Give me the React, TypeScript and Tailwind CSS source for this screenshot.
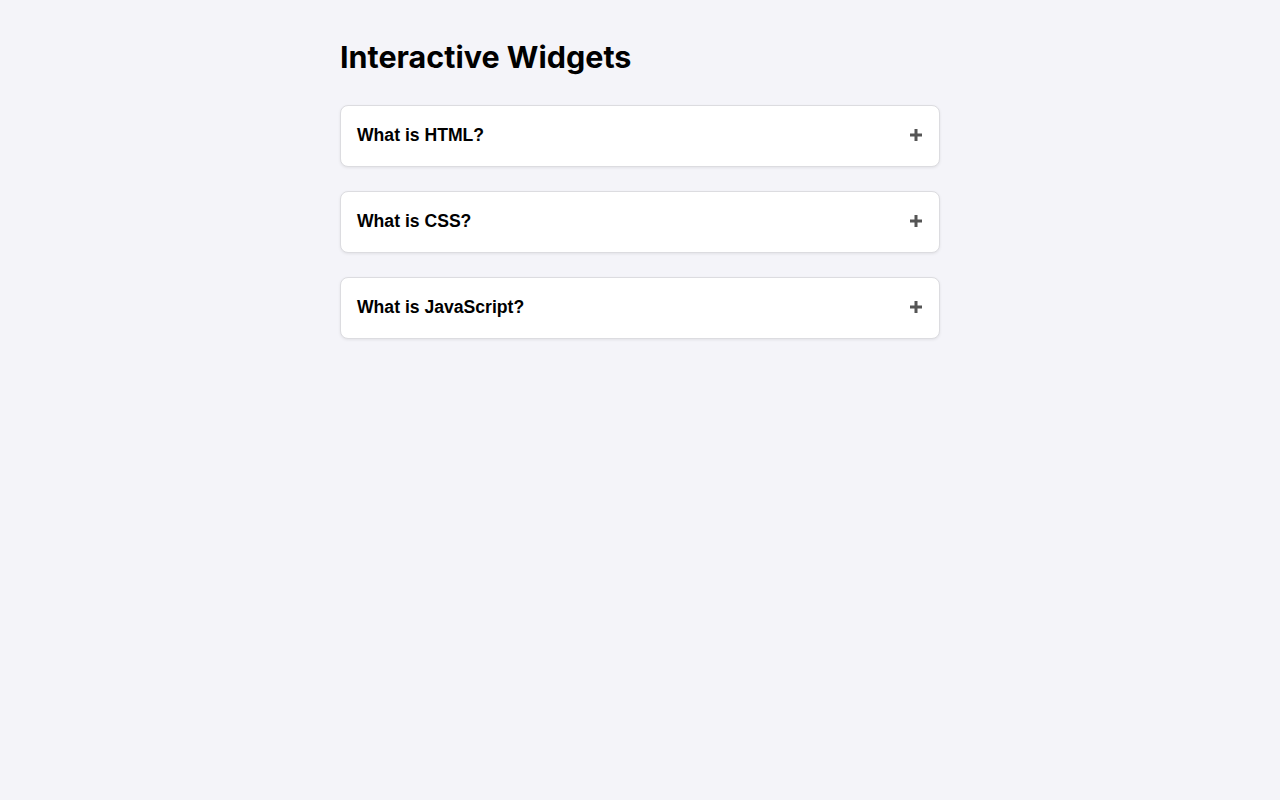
import React, { useState } from 'react';

const faqs = [
  { q: 'What is HTML?', a: 'HTML is the standard markup language for creating web pages.' },
  { q: 'What is CSS?', a: 'CSS describes how HTML elements are to be displayed on screen.' },
  { q: 'What is JavaScript?', a: 'JavaScript is the programming language of the web.' },
];

function PlusIcon({ open }: { open: boolean }) {
  return (
    <svg width="12" height="12" viewBox="0 0 12 12" className="shrink-0">
      <rect x="0" y="4.5" width="12" height="3" fill="#555" />
      {!open && <rect x="4.5" y="0" width="3" height="12" fill="#555" />}
    </svg>
  );
}

function AccordionItem({ q, a }: { q: string; a: string }) {
  const [open, setOpen] = useState(false);

  return (
    <div className="rounded-lg border border-[#dcdce0] bg-white shadow-[0_1px_3px_rgba(0,0,0,0.08)]">
      <button
        type="button"
        onClick={() => setOpen(o => !o)}
        className="flex w-full items-center justify-between px-4 pt-[15px] pb-[17px] text-left"
      >
        <span className="flex h-[28px] items-center text-[17.6px] font-bold text-black [font-family:'Liberation_Sans',Arial,sans-serif]">
          {q}
        </span>
        <span className="mr-[1px] flex h-[28px] items-center">
          <PlusIcon open={open} />
        </span>
      </button>
      {open && (
        <div className="px-4 pb-4 text-[15px] text-[#333] [font-family:'Liberation_Sans',Arial,sans-serif]">
          {a}
        </div>
      )}
    </div>
  );
}

export default function App() {
  return (
    <div className="min-h-screen bg-[#f4f4f9]">
      <div className="mx-auto w-[600px] pt-[38px]">
        <h1 className="mb-[29px] text-[30.5px] leading-[38px] font-bold text-black [font-family:Inter,sans-serif]">
          Interactive Widgets
        </h1>
        <div className="flex flex-col gap-6">
          {faqs.map(f => (
            <AccordionItem key={f.q} q={f.q} a={f.a} />
          ))}
        </div>
      </div>
    </div>
  );
}
